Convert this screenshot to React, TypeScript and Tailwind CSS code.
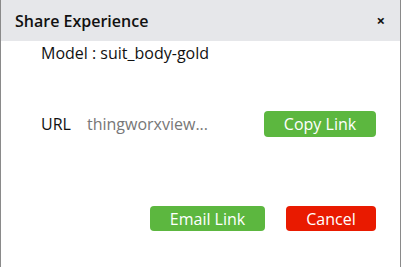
export default function App() {
  return (
    <div className="w-[402px] h-[267px] bg-white font-['Open_Sans',sans-serif]">
      <div className="w-[401px] h-[267px] border-x border-[#8a8a8a] flex flex-col">
        {/* Header */}
        <div className="h-[41px] bg-[#e6e7ea] flex items-center justify-between pl-[14px] pr-[15px]">
          <span className="text-[16px] font-semibold text-[#111]">Share Experience</span>
          <span className="text-[15px] font-bold text-[#111] leading-none">×</span>
        </div>

        {/* Body */}
        <div className="pl-[40px] pr-[24px] pt-[1px]">
          <div className="text-[16px] text-[#111] leading-[22px]">Model : suit_body-gold</div>

          <div className="mt-[47px] h-[26px] flex items-center">
            <span className="text-[16px] text-[#111] w-[46px] leading-none">URL</span>
            <span className="text-[16px] text-[#777] leading-none">thingworxview...</span>
            <button className="ml-auto w-[112px] h-[26px] rounded-[4px] bg-[#5cb73f] text-white text-[16px] leading-none">
              Copy Link
            </button>
          </div>

          <div className="mt-[69px] flex justify-end gap-[21px]">
            <button className="w-[115px] h-[25px] rounded-[4px] bg-[#5cb73f] text-white text-[16px] leading-none">
              Email Link
            </button>
            <button className="w-[90px] h-[25px] rounded-[4px] bg-[#e91a00] text-white text-[16px] leading-none">
              Cancel
            </button>
          </div>
        </div>
      </div>
    </div>
  );
}
